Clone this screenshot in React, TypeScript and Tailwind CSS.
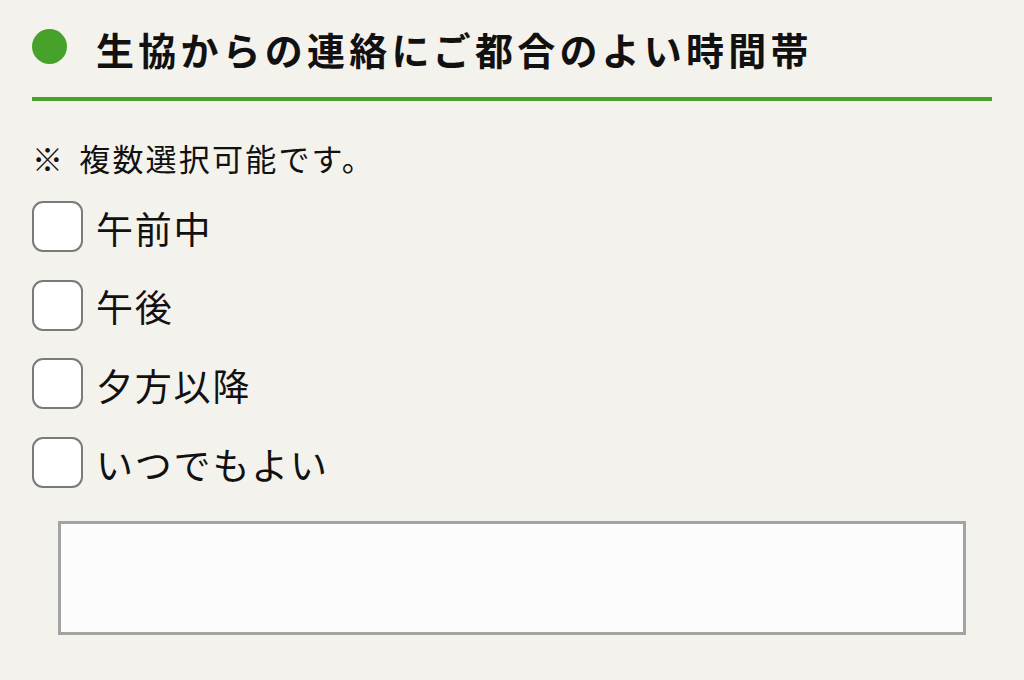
import React from "react";

const options = ["午前中", "午後", "夕方以降", "いつでもよい"];

export default function App() {
  return (
    <div
      className="w-[1024px] h-[680px] bg-[#f4f2ec] text-[#111111] overflow-hidden"
      style={{ fontFamily: '"Noto Sans CJK JP", "Noto Sans", sans-serif' }}
    >
      <div className="ml-[32px] w-[960px] flex flex-col">
        <div className="h-[97px] flex items-center">
          <div className="w-[35px] h-[35px] rounded-full bg-[#46a22b] shrink-0 -mt-[4px]" />
          <h2 className="ml-[29px] text-[38px] font-bold tracking-[4.2px] leading-none">
            生協からの連絡にご都合のよい時間帯
          </h2>
        </div>
        <div className="h-[4px] bg-[#46a22b]" />
        <p className="mt-[39px] h-[34px] flex items-center text-[31px] leading-none tracking-[2.2px]">
          <span>※</span>
          <span className="ml-[14px]">複数選択可能です。</span>
        </p>
        <div className="mt-[27px] flex flex-col gap-[27.7px]">
          {options.map((o) => (
            <label key={o} className="flex items-center h-[51px]">
              <span className="w-[51px] h-[51px] rounded-[11px] border-2 border-[#7a7a78] bg-white shrink-0" />
              <span className="ml-[13px] text-[37px] leading-none tracking-[1.8px] mt-[3px]">{o}</span>
            </label>
          ))}
        </div>
        <div className="mt-[33px] ml-[26px] w-[908px] h-[114px] border-[3px] border-[#a3a3a3] bg-[#fcfcfc]" />
      </div>
    </div>
  );
}
